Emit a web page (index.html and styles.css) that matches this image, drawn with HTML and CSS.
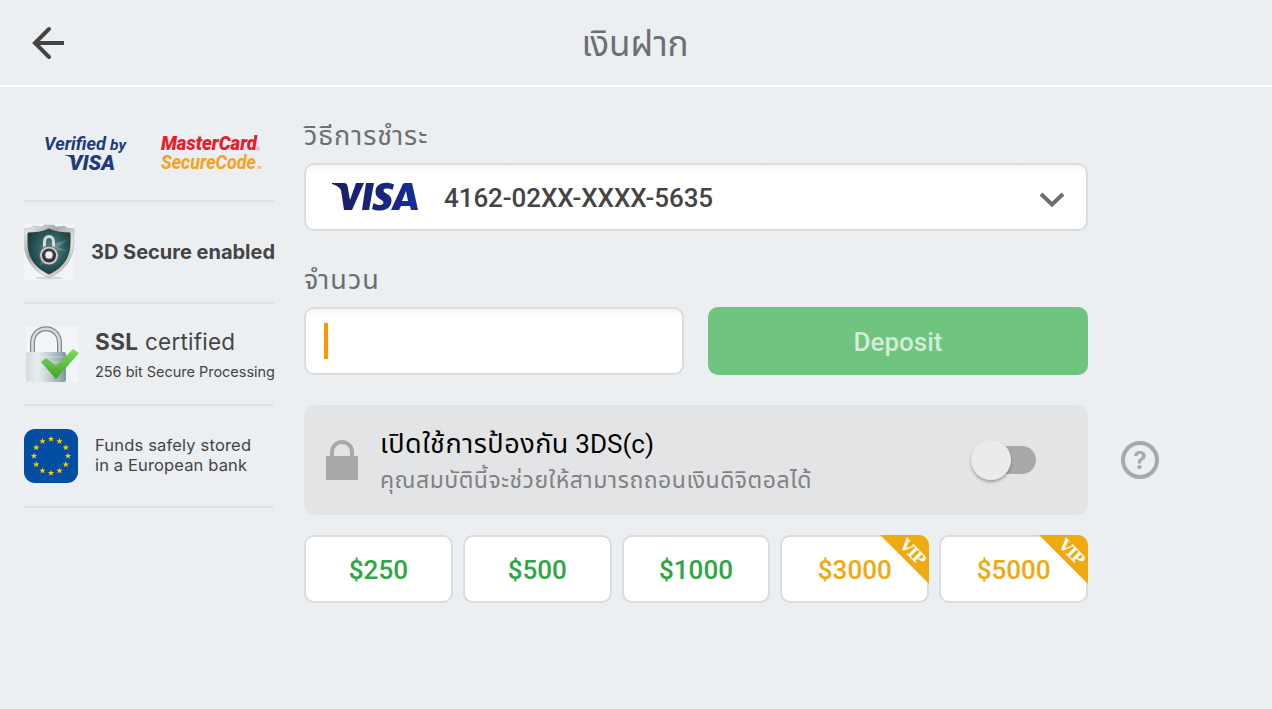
FILE: index.html
```html
<!DOCTYPE html>
<html lang="th">
<head>
    <meta charset="UTF-8">
    <meta name="viewport" content="width=device-width, initial-scale=1.0">
    <title>เงินฝาก</title>
    <link rel="stylesheet" href="styles.css">
</head>
<body>
    <header class="header">
        <button class="back" aria-label="Back">
            <svg width="34" height="34" viewBox="0 0 34 34" fill="none" stroke="#444" stroke-width="4">
                <path d="M33 17H4"/>
                <path d="M18 3 4 17l14 14" stroke-linecap="round" stroke-linejoin="miter"/>
            </svg>
        </button>
        <h1 class="title">เงินฝาก</h1>
    </header>

    <div class="page">
        <!-- security badges -->
        <aside class="sidebar">
            <div class="badge logos">
                <svg class="logo-art" width="250" height="50" viewBox="0 0 250 50">
                    <g fill="#1f3a7d">
                        <text x="20" y="22" font-size="19" textLength="62" lengthAdjust="spacingAndGlyphs">Verified</text>
                        <text x="86" y="22" font-size="15" textLength="16" lengthAdjust="spacingAndGlyphs">by</text>
                        <text x="45" y="42" font-size="21" font-weight="900" textLength="46" lengthAdjust="spacingAndGlyphs">VISA</text>
                        <path d="M40 27h9l3 7c-3-4-7-6-12-7z"/>
                    </g>
                    <text x="137" y="22" font-size="20" font-weight="900" fill="#e81c2a" textLength="96" lengthAdjust="spacingAndGlyphs">MasterCard</text>
                    <text x="137" y="41" font-size="20" fill="#f6a01c" textLength="95" lengthAdjust="spacingAndGlyphs">SecureCode</text>
                    <circle cx="234" cy="20.500" r="1.500" fill="none" stroke="#e8707a" stroke-width=".7"/>
                    <text x="233" y="41" font-size="3" fill="#f6a01c">TM</text>
                </svg>
            </div>

            <div class="badge">
                <svg class="badge-icon" width="51" height="56" viewBox="0 0 51 56">
                    <defs>
                        <linearGradient id="rim" x1="0" y1="0" x2="1" y2="1">
                            <stop offset="0" stop-color="#f5f5f5"/>
                            <stop offset=".35" stop-color="#a5a8a9"/>
                            <stop offset=".65" stop-color="#e4e4e4"/>
                            <stop offset="1" stop-color="#8b8f90"/>
                        </linearGradient>
                        <radialGradient id="teal" cx=".55" cy=".45" r=".65">
                            <stop offset="0" stop-color="#5f9290"/>
                            <stop offset=".5" stop-color="#2b5c5f"/>
                            <stop offset="1" stop-color="#12383c"/>
                        </radialGradient>
                    </defs>
                    <rect width="50" height="56" fill="#f1f5f7"/>
                    <ellipse cx="25" cy="54" rx="14" ry="1.500" fill="#d5d9da"/>
                    <path d="M0 5 7 4l3-2 8 1 2-2h10l2 2 8-1 3 2 7 1v12c0 17-9 30-25 37C9 47 0 35 0 18z" fill="url(#rim)" stroke="#b4b7b8" stroke-width=".6"/>
                    <path d="M4 9c8 0 15-1 21-4 6 3 13 4 21 4v10c0 15-8 25-21 31C12 44 4 34 4 19z" fill="url(#teal)" stroke="#303a3b"/>
                    <path d="m28 20 15-4-9 7 9 4-13-1zM22 38l-7 4 5-8z" fill="#8fb7b4" opacity=".4"/>
                    <path d="M20.500 24v-6c0-7.500 9-7.500 9 0v6" fill="none" stroke="#d8dbdb" stroke-width="3"/>
                    <circle cx="25" cy="31.500" r="9.500" fill="#c9cccc" stroke="#5b6060"/>
                    <circle cx="25" cy="31.500" r="7" fill="#333"/>
                    <circle cx="25" cy="31" r="4" fill="#f0f0f0" stroke="#888"/>
                </svg>
                <svg class="badge-text" width="184" height="40" viewBox="0 0 184 40">
                    <text x="0" y="27" font-size="20" font-weight="700" textLength="184">3D Secure enabled</text>
                </svg>
            </div>

            <div class="badge">
                <svg class="badge-icon" width="55" height="56" viewBox="0 0 55 56">
                    <defs>
                        <linearGradient id="steel" x1="0" x2="1">
                            <stop offset="0" stop-color="#d3dbdf"/>
                            <stop offset=".3" stop-color="#e8edef"/>
                            <stop offset=".6" stop-color="#c0ccd0"/>
                            <stop offset="1" stop-color="#83969d"/>
                        </linearGradient>
                        <linearGradient id="check" x1="0" y1="0" x2="0" y2="1">
                            <stop offset="0" stop-color="#83dc5c"/>
                            <stop offset="1" stop-color="#3ea528"/>
                        </linearGradient>
                    </defs>
                    <rect x="2" width="53" height="56" fill="#f1f5f8"/>
                    <path d="M8.500 28V17C8.500-2 35.500-2 35.500 17v11" fill="none" stroke="#7d8c94" stroke-width="5"/>
                    <path d="M8.500 28V17C8.500-2 35.500-2 35.500 17v11" fill="none" stroke="#d5dde1" stroke-width="2.500"/>
                    <rect x="2" y="26" width="40" height="30" rx="2" fill="url(#steel)"/>
                    <path d="M4 31h35M4 36h35M4 41h35M4 46h35" stroke="#f4f7f8" stroke-width=".7" opacity=".6"/>
                    <path d="m17 36 5-4 10 8 17-17 6 4-23 26z" fill="url(#check)"/>
                </svg>
                <svg class="badge-text" width="181" height="60" viewBox="0 0 181 60">
                    <text x="0" y="26" font-size="22.500" font-weight="700" textLength="43">SSL</text>
                    <text x="50" y="26" font-size="22.500" textLength="90">certified</text>
                    <text x="0" y="53" font-size="14.500" textLength="180">256 bit Secure Processing</text>
                </svg>
            </div>

            <div class="badge">
                <svg class="badge-icon" width="54" height="54" viewBox="0 0 54 54">
                    <defs>
                        <path id="star" d="m0-3.200.8 2.200h2.300L1.300.4 2 2.700 0 1.300-2 2.700l.7-2.300L-3.100-1h2.300z" fill="#fc0"/>
                    </defs>
                    <rect width="54" height="54" rx="11" fill="#034ea2"/>
                    <use href="#star" x="27" y="10"/>
                    <use href="#star" x="35.500" y="12.300"/>
                    <use href="#star" x="41.800" y="18.500"/>
                    <use href="#star" x="44" y="27"/>
                    <use href="#star" x="41.800" y="35.500"/>
                    <use href="#star" x="35.500" y="41.800"/>
                    <use href="#star" x="27" y="44"/>
                    <use href="#star" x="18.500" y="41.800"/>
                    <use href="#star" x="12.200" y="35.500"/>
                    <use href="#star" x="10" y="27"/>
                    <use href="#star" x="12.200" y="18.500"/>
                    <use href="#star" x="18.500" y="12.300"/>
                </svg>
                <svg class="badge-text" width="160" height="50" viewBox="0 0 160 50">
                    <text x="1" y="20" font-size="16.500" textLength="156">Funds safely stored</text>
                    <text x="1" y="40" font-size="16.500" textLength="152">in a European bank</text>
                </svg>
            </div>
        </aside>

        <main class="main">
            <div class="label">วิธีการชำระ</div>
            <div class="field select">
                <svg class="visa" width="88" height="32" viewBox="0 0 88 32">
                    <defs>
                        <linearGradient id="visaBlue" gradientUnits="userSpaceOnUse" x1="0" x2="88" y1="0" y2="0">
                            <stop offset="0" stop-color="#1a1f5e"/>
                            <stop offset="1" stop-color="#142c9c"/>
                        </linearGradient>
                    </defs>
                    <g fill="url(#visaBlue)">
                        <path d="M1 2h12c2 0 3 1 3.500 3l2.500 14L25 2h8L21 29h-8L10 9C8 6 5 4 1 3z"/>
                        <path d="M35 2h8l-5 27h-7z"/>
                        <path d="M63 3.500 61.500 9c-4-2-9-2-9 .5 0 3 8 3.500 8 10 0 10-12 12-19.500 8.500l1.500-6c5 3 10 2.500 10-.5 0-3-8-3.500-8-10.500C44.500 2 55 0 63 3.500z"/>
                        <path fill-rule="evenodd" d="M74 2h7l6 27h-7l-1-4h-9l-2 4h-8L71 5c.6-2 1.500-3 3-3zm1 8-4 10h6z"/>
                    </g>
                </svg>
                <span class="card-number">4162-02XX-XXXX-5635</span>
                <svg class="chevron" width="26" height="18" viewBox="0 0 26 18" fill="none" stroke="#6d6e70" stroke-width="4">
                    <path d="m2 4 11 10.500L24 4"/>
                </svg>
            </div>

            <div class="label">จำนวน</div>
            <div class="row">
                <div class="field amount"><span class="caret"></span></div>
                <button class="deposit">Deposit</button>
            </div>

            <div class="protect-row">
                <div class="protect">
                    <svg class="lock" width="32" height="40" viewBox="0 0 32 40">
                        <path d="M6 18v-6a10 10 0 0 1 20 0v6" fill="none" stroke="#a8a9ab" stroke-width="4"/>
                        <path d="M0 16h32v24H0z" fill="#a8a9ab"/>
                    </svg>
                    <div class="protect-text">
                        <div class="protect-title"><span class="thai">เปิดใช้การป้องกัน</span> 3DS(c)</div>
                        <div class="protect-note">คุณสมบัตินี้จะช่วยให้สามารถถอนเงินดิจิตอลได้</div>
                    </div>
                    <div class="toggle"><span class="knob"></span></div>
                </div>
                <div class="help">?</div>
            </div>

            <div class="presets">
                <button class="preset">$250</button>
                <button class="preset">$500</button>
                <button class="preset">$1000</button>
                <button class="preset vip">$3000<span class="ribbon"><span class="ribbon-text">VIP</span></span></button>
                <button class="preset vip">$5000<span class="ribbon"><span class="ribbon-text">VIP</span></span></button>
            </div>
        </main>
    </div>
</body>
</html>
```
FILE: styles.css
```css
* {
    box-sizing: border-box;
}

body {
    margin: 0;
    height: 709px;
    background: #ebeff2;
    font-family: Roboto, "Noto Sans Thai", "Noto Sans", sans-serif;
    color: #444;
    overflow: hidden;
}

button {
    margin: 0;
    padding: 0;
    border: none;
    background: none;
    font-family: inherit;
    cursor: pointer;
}

/* header */
.header {
    display: grid;
    grid-template-columns: 100px 1fr 100px;
    align-items: center;
    height: 87px;
    border-bottom: 2px solid #fff;
}

.back {
    display: flex;
    padding-left: 31px;
}

.title {
    margin: 0;
    padding: 4px 2px 0 0;
    font-size: 35px;
    font-weight: 400;
    line-height: 50px;
    text-align: center;
    color: #6d6e70;
}

.page {
    display: flex;
    gap: 30px;
    padding-left: 24px;
}

/* sidebar */
.sidebar {
    width: 250px;
}

.badge {
    display: flex;
    align-items: center;
    height: 102px;
    border-bottom: 2px solid #dfe3e6;
}

.logos {
    height: 115px;
    padding-top: 18px;
}

.logo-art {
    overflow: visible;
    font-family: Roboto, sans-serif;
    font-style: italic;
    font-weight: 700;
}

.badge-icon {
    flex: none;
}

.badge-text {
    flex: none;
    margin-left: 16px;
    font-family: Inter, sans-serif;
    fill: #444;
    overflow: visible;
}

/* form */
.main {
    width: 855px;
}

.label {
    height: 76px;
    padding-top: 29px;
    font-size: 27px;
    line-height: 40px;
    letter-spacing: 1px;
    color: #6d6e70;
}

.field {
    display: flex;
    align-items: center;
    height: 68px;
    background: linear-gradient(#f5f5f5, #fff 8px);
    border: 2px solid #dbdbdb;
    border-radius: 10px;
}

.select {
    width: 784px;
    padding: 0 21px 0 25px;
}

.card-number {
    flex: 1;
    margin-left: 25px;
    padding-top: 2px;
    font-size: 26px;
    font-weight: 500;
    letter-spacing: -0.08px;
}

.chevron {
    margin-top: 4px;
}

.row {
    display: flex;
    gap: 24px;
}

.amount {
    width: 380px;
    padding-left: 18px;
}

.caret {
    width: 4px;
    height: 36px;
    background: #ff9500;
}

.deposit {
    width: 380px;
    height: 68px;
    padding-top: 2px;
    border-radius: 10px;
    background: #6fc47f;
    color: #d2edd7;
    font-size: 26px;
    font-weight: 500;
}

.protect-row {
    display: flex;
    align-items: center;
    gap: 33px;
    margin-top: 30px;
}

.protect {
    display: flex;
    align-items: center;
    width: 784px;
    height: 110px;
    padding: 0 52px 0 22px;
    border-radius: 10px;
    background: #e3e4e6;
}

.protect-text {
    flex: 1;
    margin-left: 22px;
    padding-top: 2px;
    white-space: nowrap;
}

.protect-title {
    font-size: 26px;
    line-height: 40px;
    color: #000;
}

.thai {
    font-size: 27px;
    letter-spacing: 0.5px;
}

.protect-note {
    font-size: 23px;
    line-height: 34px;
    letter-spacing: 0.5px;
    color: #808184;
}

.toggle {
    display: flex;
    align-items: center;
    width: 62px;
    height: 28px;
    border-radius: 14px;
    background: #a8a9ab;
}

.knob {
    flex: none;
    width: 40px;
    height: 40px;
    margin-left: -3px;
    border-radius: 50%;
    background: #ebebeb;
    box-shadow: 0 2px 3px rgba(0, 0, 0, 0.3);
}

.help {
    display: flex;
    align-items: center;
    justify-content: center;
    width: 38px;
    height: 38px;
    border: 4px solid #a8a9ab;
    border-radius: 50%;
    color: #a8a9ab;
    font-family: Inter, sans-serif;
    font-size: 24px;
    font-weight: 700;
}

/* preset amounts */
.presets {
    display: grid;
    grid-template-columns: repeat(5, 1fr);
    gap: 10px;
    width: 784px;
    margin-top: 20px;
}

.preset {
    position: relative;
    height: 68px;
    padding-top: 2px;
    border: 2px solid #dbdbdb;
    border-radius: 10px;
    background: #fff;
    color: #2ea643;
    font-size: 26px;
    font-weight: 500;
}

.vip {
    color: #eeaa0e;
}

.ribbon {
    position: absolute;
    top: -2px;
    right: -2px;
    width: 49px;
    height: 49px;
    border-top-right-radius: 10px;
    background: #eeaa0e;
    clip-path: polygon(0 0, 100% 0, 100% 100%);
}

.ribbon-text {
    position: absolute;
    top: 7px;
    left: 15px;
    width: 34px;
    font-family: "DejaVu Serif", serif;
    font-size: 16px;
    font-weight: 700;
    line-height: 20px;
    letter-spacing: -1.2px;
    color: #fff;
    transform: rotate(45deg);
}
```
